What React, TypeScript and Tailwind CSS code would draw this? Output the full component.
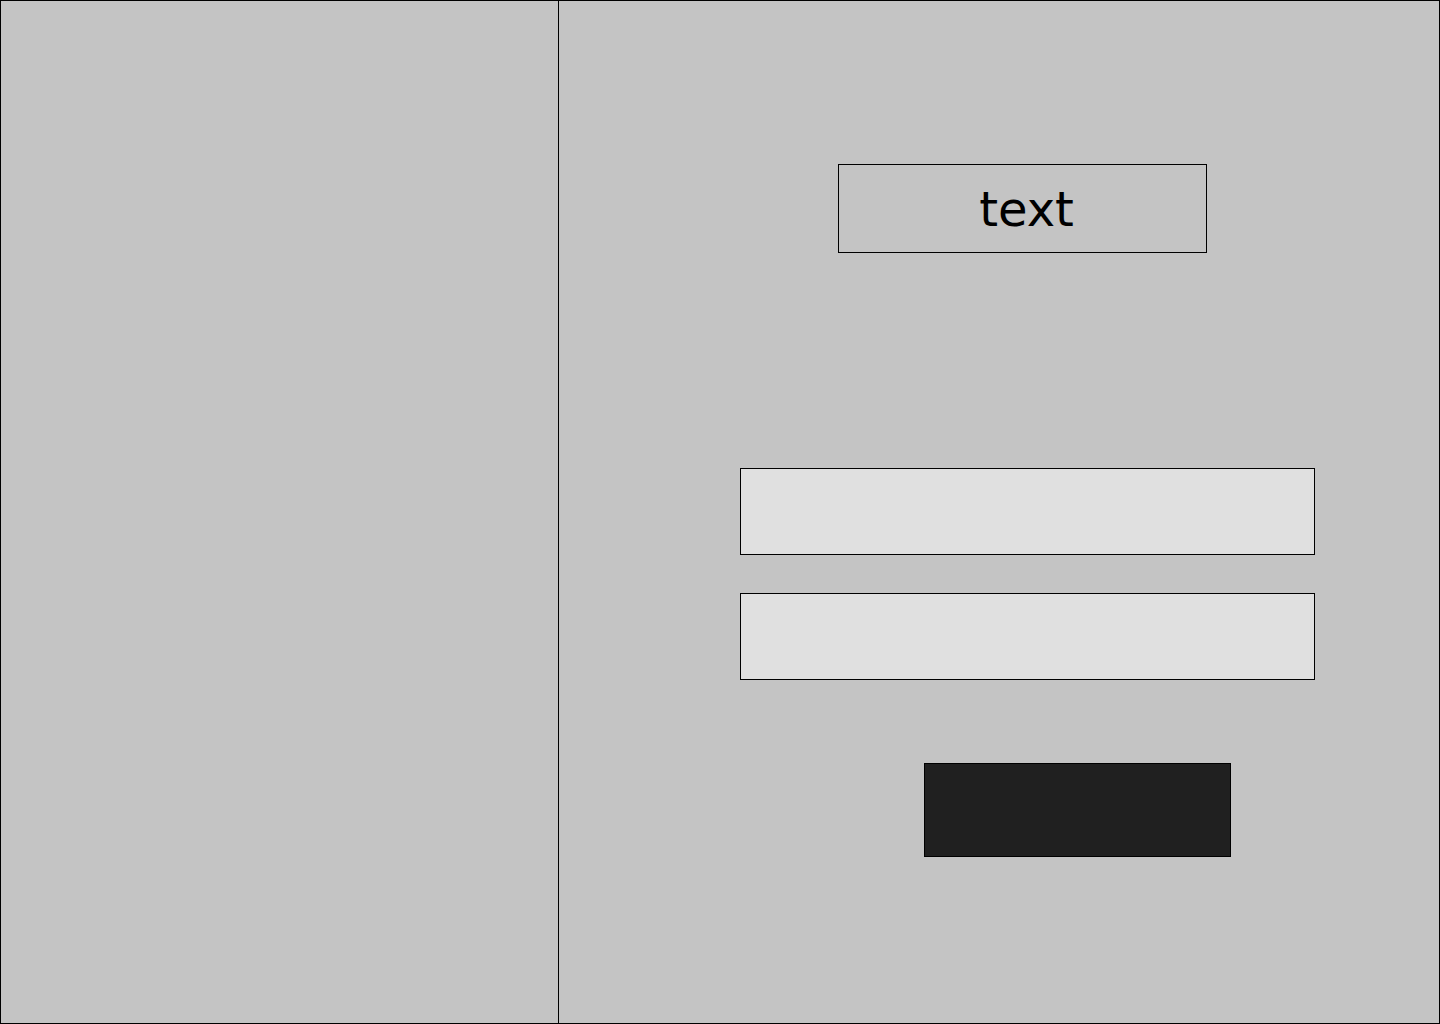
export default function App() {
  return (
    <div className="flex h-[1024px] w-[1440px] border border-black bg-[#c4c4c4]">
      <div className="w-[558px] shrink-0 border-r border-black" />
      <div className="flex flex-1 flex-col items-start pt-[163px]">
        <div
          className="ml-[279px] flex h-[89px] w-[369px] items-center justify-center border border-black pl-[8px] text-[48px] leading-none text-black"
          style={{ fontFamily: '"Comic Sans MS", "DejaVu Sans", sans-serif' }}
        >
          text
        </div>
        <div className="ml-[181px] mt-[215px] h-[87px] w-[575px] border border-black bg-[#e0e0e0]" />
        <div className="ml-[181px] mt-[38px] h-[87px] w-[575px] border border-black bg-[#e0e0e0]" />
        <button className="ml-[365px] mt-[83px] h-[94px] w-[307px] border border-black bg-[#202020]" />
      </div>
    </div>
  );
}
